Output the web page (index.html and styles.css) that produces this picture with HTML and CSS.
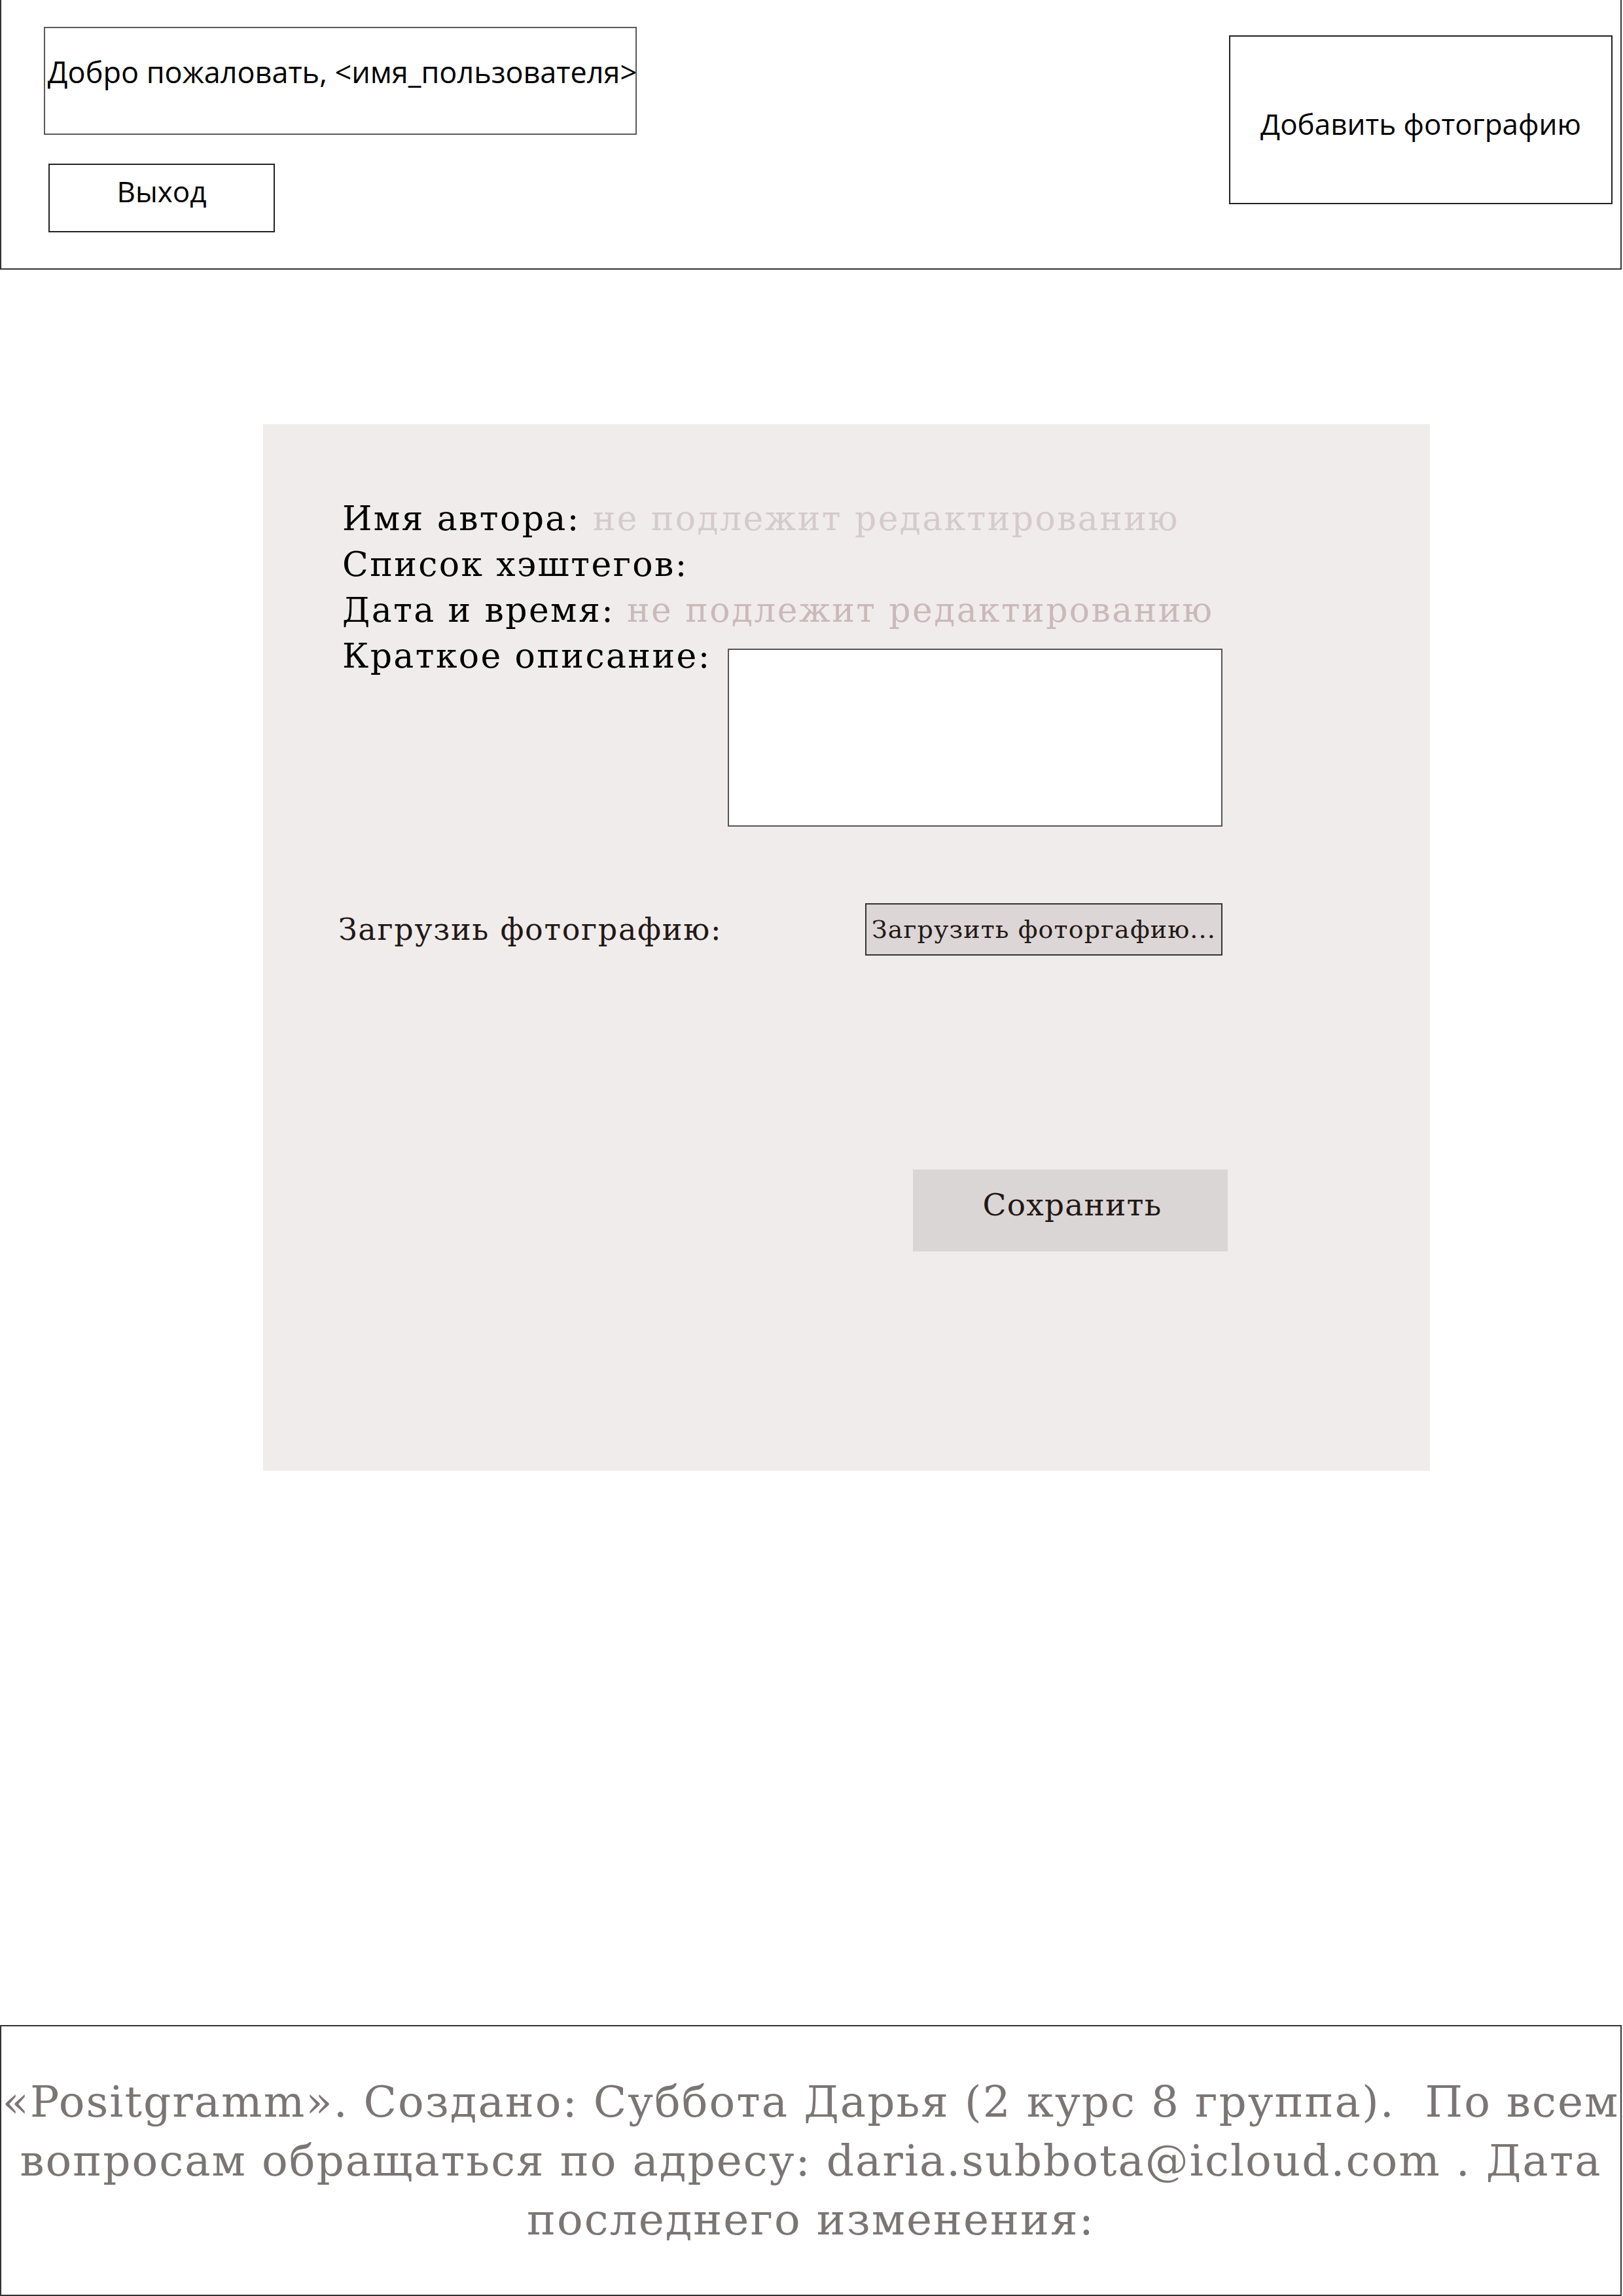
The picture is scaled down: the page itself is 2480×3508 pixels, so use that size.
FILE: index.html
```html
<!DOCTYPE html>
<html lang="ru">
<head>
<meta charset="utf-8">
<title>Positgramm — редактирование</title>
<link rel="stylesheet" href="styles.css">
</head>
<body>
<div class="page">
  <header class="topbar">
    <div class="topbar-left">
      <div class="welcome">Добро пожаловать, &lt;имя_пользователя&gt;</div>
      <div class="logout">Выход</div>
    </div>
    <div class="add-photo">Добавить фотографию</div>
  </header>

  <main class="panel">
    <div class="info">
      <div class="line">Имя автора: <span class="muted-1">не подлежит редактированию</span></div>
      <div class="line">Список хэштегов:</div>
      <div class="line">Дата и время: <span class="muted-2">не подлежит редактированию</span></div>
      <div class="desc-row">
        <div class="line desc-label">Краткое описание:</div>
        <div class="desc-box"></div>
      </div>
    </div>
    <div class="upload-row">
      <div class="upload-label">Загрузиь фотографию:</div>
      <div class="upload-btn">Загрузить фоторгафию...</div>
    </div>
    <div class="save-row">
      <div class="save-btn">Сохранить</div>
    </div>
  </main>

  <footer class="footer">
    <p class="footer-text">«Positgramm». Создано: Суббота Дарья (2 курс 8 группа).&nbsp; По всем<br>вопросам обращаться по адресу: daria.subbota@icloud.com . Дата<br>последнего изменения:</p>
  </footer>
</div>
</body>
</html>
```

FILE: styles.css
```css
html, body {
  margin: 0;
  padding: 0;
  background: #ffffff;
}

.page {
  width: 2480px;
  height: 3508px;
  display: flex;
  flex-direction: column;
  font-family: "DejaVu Serif", "Liberation Serif", serif;
}

/* ---------- header ---------- */
.topbar {
  box-sizing: border-box;
  width: 2478px;
  height: 412px;
  border-left: 2px solid #333333;
  border-right: 2px solid #333333;
  border-bottom: 2px solid #333333;
  display: flex;
  justify-content: space-between;
  align-items: flex-start;
  font-family: "Open Sans", "Noto Sans", sans-serif;
  color: #000000;
}

.topbar-left {
  display: flex;
  flex-direction: column;
  align-items: flex-start;
  padding-left: 65px;
  padding-top: 41px;
}

.welcome {
  box-sizing: border-box;
  width: 906px;
  height: 165px;
  border: 2px solid #5a5a5a;
  display: flex;
  align-items: center;
  justify-content: center;
  padding-bottom: 28px;
  padding-left: 6px;
  font-size: 45px;
  white-space: nowrap;
}

.logout {
  box-sizing: border-box;
  width: 346px;
  height: 105px;
  margin-top: 44px;
  margin-left: 7px;
  border: 2px solid #222222;
  display: flex;
  align-items: center;
  justify-content: center;
  padding-bottom: 22px;
  font-size: 44px;
}

.add-photo {
  box-sizing: border-box;
  width: 586px;
  height: 258px;
  margin-top: 54px;
  margin-right: 12px;
  border: 2px solid #222222;
  display: flex;
  align-items: center;
  justify-content: center;
  padding-top: 12px;
  font-size: 44px;
  white-space: nowrap;
}

/* ---------- main panel ---------- */
.panel {
  box-sizing: border-box;
  width: 1783px;
  height: 1599px;
  margin-top: 236px;
  margin-left: 402px;
  background: #f0ecec;
  padding: 109px 0 0 121px;
  color: #000000;
}

.line {
  font-size: 52px;
  line-height: 70px;
  letter-spacing: 2.4px;
  white-space: nowrap;
}

.muted-1 { color: #d5cbcb; }
.muted-2 { color: #cbb9ba; }

.desc-row {
  display: flex;
  align-items: flex-start;
}

.desc-label {
  width: 589px;
  flex: none;
}

.desc-box {
  box-sizing: border-box;
  width: 756px;
  height: 272px;
  margin-top: 24px;
  background: #ffffff;
  border: 2px solid #555555;
}

.upload-row {
  display: flex;
  align-items: center;
  margin-top: 117px;
  margin-left: -6px;
}

.upload-label {
  width: 805px;
  flex: none;
  font-size: 46px;
  letter-spacing: 1.7px;
  color: #231815;
  white-space: nowrap;
}

.upload-btn {
  box-sizing: border-box;
  width: 546px;
  height: 80px;
  background: #dcd6d6;
  border: 2px solid #333333;
  display: flex;
  align-items: center;
  padding-left: 8px;
  font-size: 38px;
  letter-spacing: 1.1px;
  color: #231815;
  white-space: nowrap;
}

.save-row {
  display: flex;
  margin-top: 327px;
  margin-left: 872px;
}

.save-btn {
  width: 481px;
  height: 125px;
  background: #dbd6d6;
  display: flex;
  align-items: center;
  justify-content: center;
  font-size: 47px;
  letter-spacing: 1.2px;
  color: #231815;
  padding-bottom: 18px;
  padding-left: 6px;
  box-sizing: border-box;
}

/* ---------- footer ---------- */
.footer {
  box-sizing: border-box;
  width: 2478px;
  height: 414px;
  margin-top: auto;
  border: 2px solid #333333;
  padding-top: 71px;
}

.footer-text {
  margin: 0;
  text-align: center;
  font-size: 66px;
  line-height: 90px;
  letter-spacing: 2px;
  color: #7b7575;
  white-space: nowrap;
}
```
